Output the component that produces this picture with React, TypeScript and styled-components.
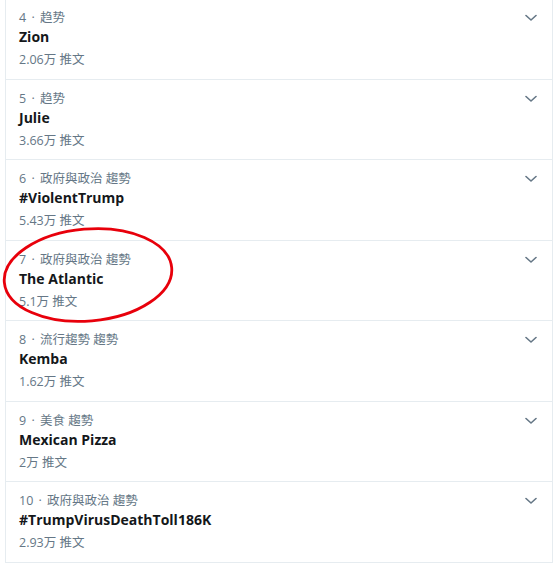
import React from "react";
import styled, { createGlobalStyle } from "styled-components";

const Global = createGlobalStyle`
  html, body { margin: 0; padding: 0; background: #ffffff; }
  body { font-family: "Open Sans", "Noto Sans CJK SC", "Noto Sans CJK TC", sans-serif; overflow: hidden; }
`;

const Page = styled.div`
  position: relative;
  width: 558px;
  height: 569px;
  overflow: hidden;
  background: #ffffff;
`;

const List = styled.div`
  margin: -1px 0 0 5px;
  width: 548px;
  border-left: 1px solid #e6ecf0;
  border-right: 1px solid #e6ecf0;
  box-sizing: border-box;
`;

const Row = styled.div`
  display: flex;
  align-items: flex-start;
  height: 80.5px;
  box-sizing: border-box;
  padding: 10px 14px 0 13px;
  border-bottom: 1px solid #e6ecf0;
`;

const Body = styled.div`
  flex: 1;
  display: flex;
  flex-direction: column;
`;

const Meta = styled.div`
  font-size: 12.5px;
  line-height: 18px;
  color: #657786;
  white-space: nowrap;
`;

const Dot = styled.span`
  margin: 0 2px;
`;

const Title = styled.div`
  font-size: 14px;
  line-height: 20px;
  font-weight: 700;
  color: #14171a;
  white-space: nowrap;
`;

const Count = styled.div`
  margin-top: 4px;
  font-size: 12.5px;
  line-height: 18px;
  color: #657786;
  white-space: nowrap;
`;

const Chevron = styled.div`
  width: 14px;
  height: 14px;
  margin-top: 2px;
  display: flex;
  align-items: center;
  justify-content: center;
`;

const Ring = styled.svg`
  position: absolute;
  left: 0;
  top: 0;
  pointer-events: none;
`;

const items = [
  { rank: "4", cat: "趋势", title: "Zion", count: "2.06万 推文" },
  { rank: "5", cat: "趋势", title: "Julie", count: "3.66万 推文" },
  { rank: "6", cat: "政府與政治 趨勢", title: "#ViolentTrump", count: "5.43万 推文" },
  { rank: "7", cat: "政府與政治 趨勢", title: "The Atlantic", count: "5.1万 推文" },
  { rank: "8", cat: "流行趨勢 趨勢", title: "Kemba", count: "1.62万 推文" },
  { rank: "9", cat: "美食 趨勢", title: "Mexican Pizza", count: "2万 推文" },
  { rank: "10", cat: "政府與政治 趨勢", title: "#TrumpVirusDeathToll186K", count: "2.93万 推文" },
];

export default function App() {
  return (
    <Page>
      <Global />
      <List>
        {items.map((it) => (
          <Row key={it.title}>
            <Body>
              <Meta>
                {it.rank} <Dot>·</Dot> {it.cat}
              </Meta>
              <Title>{it.title}</Title>
              <Count>{it.count}</Count>
            </Body>
            <Chevron>
              <svg width="12" height="8" viewBox="0 0 12 8">
                <path d="M1 1.5 L6 6 L11 1.5" fill="none" stroke="#657786" strokeWidth="1.6" strokeLinecap="round" strokeLinejoin="round" />
              </svg>
            </Chevron>
          </Row>
        ))}
      </List>
      <Ring width="558" height="569" viewBox="0 0 558 569">
        <ellipse cx="88" cy="275" rx="84" ry="46" fill="none" stroke="#e8000b" strokeWidth="2.8" transform="rotate(-5 88 275)" />
      </Ring>
    </Page>
  );
}
